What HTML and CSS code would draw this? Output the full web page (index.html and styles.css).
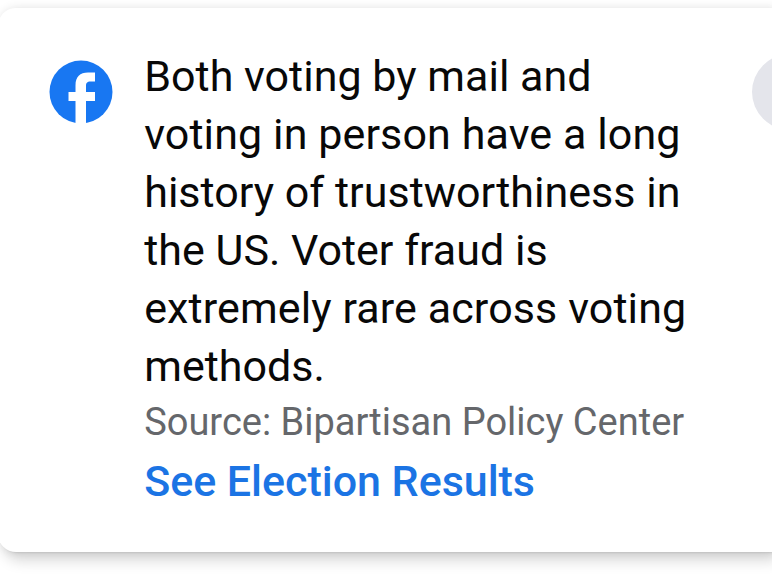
FILE: index.html
```html
<!DOCTYPE html>
<html lang="en">
<head>
<meta charset="utf-8">
<title>Voting information</title>
<link rel="stylesheet" href="styles.css">
</head>
<body>
<article class="card">
  <svg class="logo" viewBox="0 0 64 64" aria-hidden="true">
    <circle cx="32" cy="32" r="31.5" fill="#1877f2"/>
    <path fill="#fff" d="M26.500 64V41H19.500v-9h7v-6.500c0-9 4.500-13 12.500-13h7v9h-4.500c-3.500 0-4.500 1.500-4.500 4.500v6h9v9h-9v23z"/>
  </svg>
  <div class="content">
    <p class="message"><span>Both voting by mail and</span><br><span class="wide">voting in person have a long</span><br><span>history of trustworthiness in</span><br><span>the US. Voter fraud is</span><br><span class="wide">extremely rare across voting</span><br><span>methods.</span></p>
    <p class="source">Source: Bipartisan Policy Center</p>
    <a class="link">See Election Results</a>
  </div>
  <div class="dismiss"></div>
</article>
</body>
</html>
```
FILE: styles.css
```css
* { box-sizing: border-box; }
body {
  margin: 0;
  height: 579px;
  padding-top: 8px;
  overflow: hidden;
  background: #fff;
  font-family: Roboto, sans-serif;
}
.card {
  display: flex;
  width: 774px;
  height: 544px;
  margin-left: -2px;
  padding: 39px 0 0 51px;
  overflow: hidden;
  border-radius: 18px 0 0 18px;
  background: #fff;
  box-shadow: 2px 0 8px 2px rgba(0, 0, 0, .07), 2px 1px 2px rgba(0, 0, 0, .09), 5px 9px 14px rgba(0, 0, 0, .15);
}
.logo { flex: none; width: 64px; height: 64px; margin: 13px 31.2px 0 0; }
.content { flex: none; width: 607.8px; white-space: nowrap; }
p { margin: 0; }
.message { font-size: 43px; line-height: 58px; letter-spacing: .02px; color: #080808; }
.wide { letter-spacing: .11px; }
.source { font-size: 38px; line-height: 54px; color: #65676b; }
.link { display: block; font-size: 43px; line-height: 65px; font-weight: 500; letter-spacing: -.03px; color: #1b74e4; }
.dismiss { flex: none; width: 76px; height: 76px; margin-top: 7px; border-radius: 50%; background: #e4e5eb; }
```
